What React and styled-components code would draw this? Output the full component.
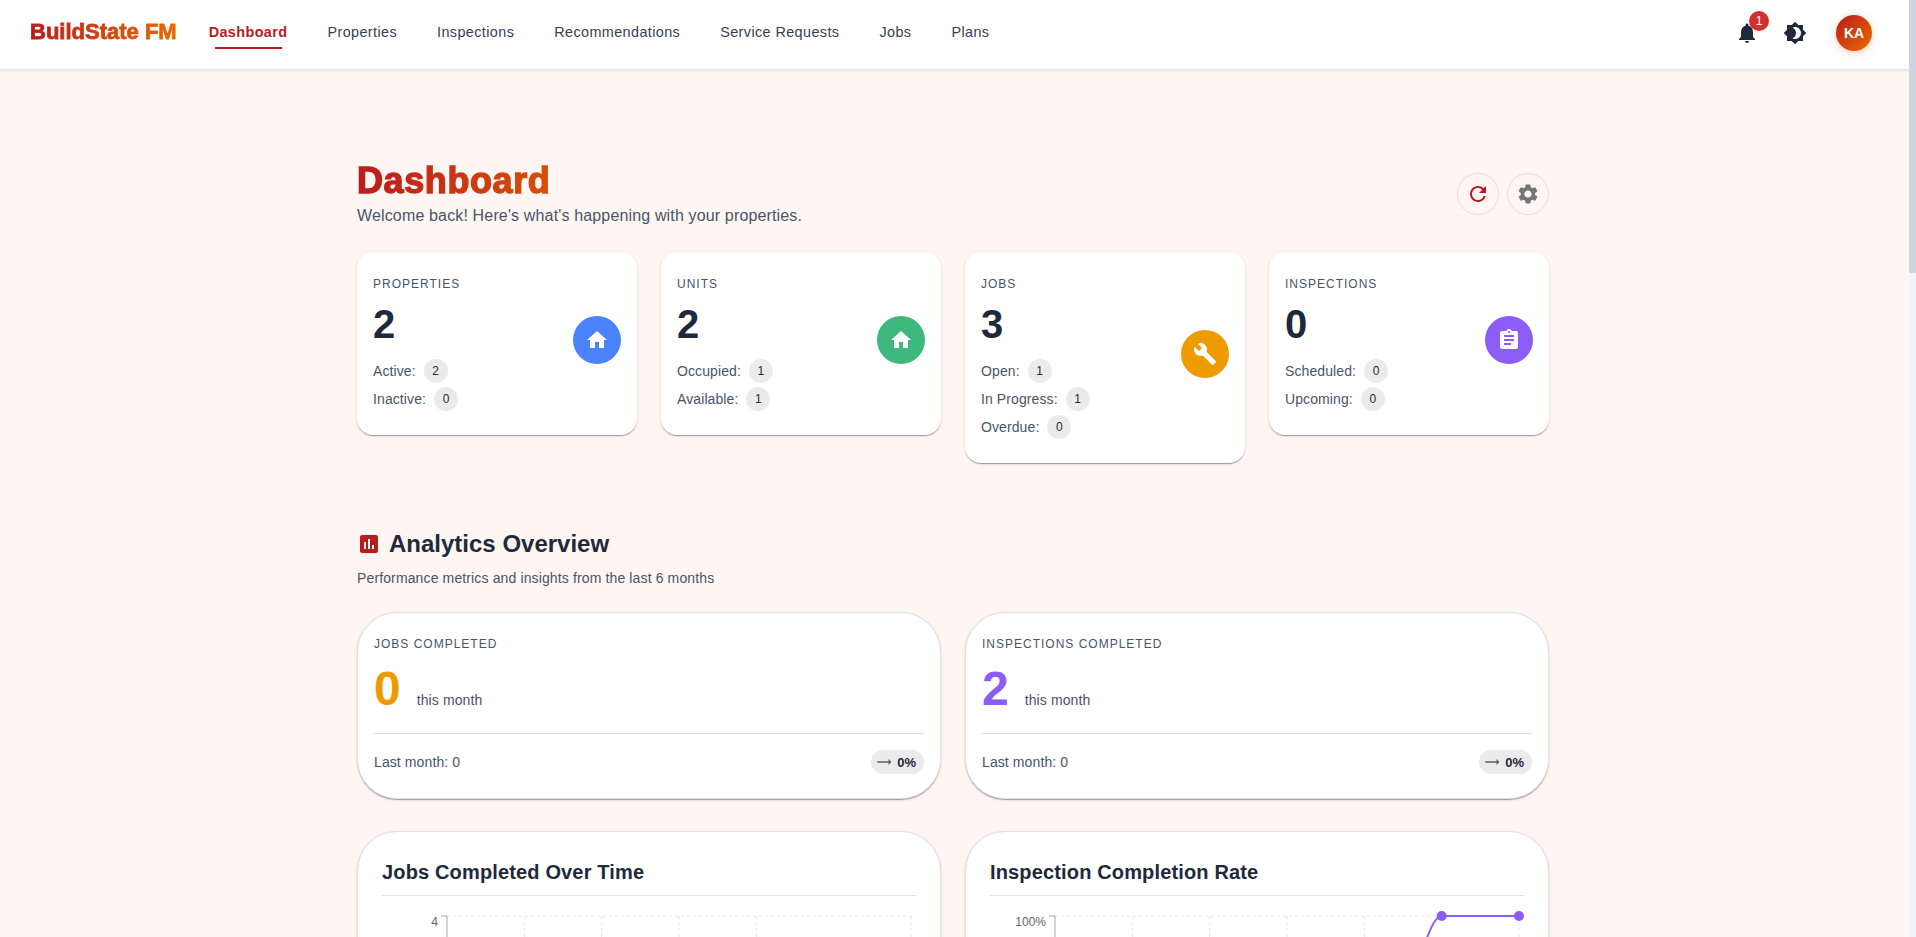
import React from "react";
import styled, { createGlobalStyle } from "styled-components";
import {
  MdHome, MdBuild, MdAssignment, MdRefresh, MdSettings,
  MdNotifications, MdBrightness4, MdAssessment, MdTrendingFlat,
} from "react-icons/md";

const FONT = `"Liberation Sans", Arial, sans-serif`;

const Global = createGlobalStyle`
  html, body { margin: 0; padding: 0; height: 100%; overflow: hidden; }
  body { background: #fff5f3; font-family: ${FONT}; color: #1e293b; }
  #root { height: 100%; }
  * { box-sizing: border-box; }
`;

const Shell = styled.div`
  display: flex;
  height: 100vh;
  background: #fff5f3;
`;

const Page = styled.div`
  flex: 1;
  min-width: 0;
  overflow-y: auto;
  scrollbar-width: none;
`;

const ScrollRail = styled.div`
  width: 7px;
  flex: none;
  background: #f1f5f9;
`;

const ScrollThumb = styled.div`
  height: 273px;
  background: #cbd5e1;
  border-radius: 0 0 2px 2px;
`;

const NavBar = styled.header`
  height: 69px;
  background: #fff;
  box-shadow: 0 1px 3px rgba(0, 0, 0, 0.14);
  display: flex;
  align-items: center;
  padding: 0 37px 5px 30px;
`;

const Logo = styled.div`
  font-size: 22px;
  font-weight: 800;
  line-height: 28px;
  background: linear-gradient(90deg, #b91c1c 0%, #ea6a00 100%);
  -webkit-background-clip: text;
  background-clip: text;
  color: transparent;
  -webkit-text-stroke: 0.8px transparent;
  margin-right: 32px;
  white-space: nowrap;
`;

const Links = styled.nav`
  display: flex;
  gap: 40px;
  flex: 1;
`;

const NavLink = styled.a`
  position: relative;
  font-size: 14.4px;
  line-height: 24px;
  letter-spacing: 0.4px;
  font-weight: ${(p) => (p.$active ? 700 : 400)};
  color: ${(p) => (p.$active ? "#b91c1c" : "#334155")};
  white-space: nowrap;
  &::after {
    content: "";
    display: ${(p) => (p.$active ? "block" : "none")};
    position: absolute;
    left: 6px;
    right: 5px;
    bottom: -5px;
    height: 2px;
    background: #b91c1c;
  }
`;

const NavActions = styled.div`
  display: flex;
  align-items: center;
  margin-top: 2px;
`;

const BellWrap = styled.div`
  position: relative;
  width: 24px;
  height: 24px;
  color: #1e293b;
  font-size: 24px;
  margin-right: 24px;
  svg { display: block; }
`;

const Badge = styled.span`
  position: absolute;
  top: -10px;
  left: 14px;
  width: 20px;
  height: 20px;
  border-radius: 50%;
  background: #d32f2f;
  color: #fff;
  font-size: 12px;
  line-height: 20px;
  text-align: center;
`;

const ThemeIcon = styled.div`
  width: 24px;
  height: 24px;
  font-size: 24px;
  color: #1e293b;
  margin-right: 29px;
  svg { display: block; }
`;

const Avatar = styled.div`
  width: 36px;
  height: 36px;
  border-radius: 50%;
  background: linear-gradient(135deg, #b91c1c 0%, #ea6a00 100%);
  color: #fff;
  font-size: 14px;
  font-weight: 700;
  display: flex;
  align-items: center;
  justify-content: center;
  box-shadow: 0 2px 8px rgba(234, 88, 12, 0.3);
`;

const Main = styled.main`
  width: 1192px;
  margin-left: 357px;
  padding-top: 96px;
  padding-bottom: 200px;
`;

const Header = styled.section`
  display: flex;
  justify-content: space-between;
  align-items: center;
  height: 59px;
  margin-bottom: 28px;
`;

const Title = styled.h1`
  margin: 0;
  font-size: 36px;
  line-height: 38px;
  font-weight: 800;
  letter-spacing: 0.6px;
  background: linear-gradient(90deg, #b91c1c 0%, #ea6a00 300px);
  -webkit-background-clip: text;
  background-clip: text;
  color: transparent;
  -webkit-text-stroke: 1.4px transparent;
  width: 300px;
`;

const Subtitle = styled.p`
  margin: 4px 0 0;
  font-size: 16px;
  line-height: 24px;
  letter-spacing: 0.15px;
  color: #475569;
`;

const HeaderActions = styled.div`
  display: flex;
  gap: 8px;
  margin-top: -2px;
`;

const RoundButton = styled.button`
  width: 42px;
  height: 42px;
  border-radius: 50%;
  border: 1px solid rgba(185, 28, 28, 0.15);
  background: transparent;
  color: ${(p) => p.$color};
  display: flex;
  align-items: center;
  justify-content: center;
  padding: 0;
  font-size: 24px;
`;

const StatGrid = styled.section`
  display: grid;
  grid-template-columns: repeat(4, 1fr);
  gap: 24px;
  align-items: start;
`;

const StatCard = styled.article`
  background: #fff;
  border-radius: 16px;
  padding: 16px 16px 24px;
  box-shadow: 0 2px 1px -1px rgba(0, 0, 0, 0.2), 0 1px 1px rgba(0, 0, 0, 0.14), 0 1px 3px rgba(0, 0, 0, 0.12);
  display: flex;
  align-items: center;
  justify-content: space-between;
`;

const Overline = styled.div`
  font-size: 12px;
  line-height: 32px;
  letter-spacing: 1px;
  color: #475569;
  text-transform: uppercase;
`;

const StatValue = styled.div`
  font-size: 40px;
  line-height: 48px;
  font-weight: 700;
  color: #1e293b;
`;

const StatRows = styled.div`
  display: flex;
  flex-direction: column;
  gap: 4px;
  margin-top: 11px;
`;

const StatRow = styled.div`
  display: flex;
  align-items: center;
  gap: 8px;
  font-size: 14px;
  line-height: 24px;
  letter-spacing: 0.1px;
  color: #475569;
`;

const CountChip = styled.span`
  min-width: 24px;
  height: 24px;
  padding: 0 8px;
  border-radius: 12px;
  background: #ebebeb;
  color: #1e293b;
  font-size: 12px;
  line-height: 24px;
  text-align: center;
`;

const IconCircle = styled.div`
  width: 48px;
  height: 48px;
  border-radius: 50%;
  background: ${(p) => p.$color};
  color: #fff;
  font-size: 24px;
  display: flex;
  align-items: center;
  justify-content: center;
`;

const Analytics = styled.section`
  margin-top: 65px;
`;

const SectionTitle = styled.h2`
  margin: 0;
  display: flex;
  align-items: center;
  gap: 8px;
  font-size: 24px;
  line-height: 32px;
  font-weight: 700;
  color: #1e293b;
  svg { color: #b91c1c; }
`;

const SectionSub = styled.p`
  margin: 8px 0 0;
  font-size: 14px;
  line-height: 20px;
  letter-spacing: 0.13px;
  color: #475569;
`;

const TwoCol = styled.div`
  display: grid;
  grid-template-columns: 1fr 1fr;
  gap: 24px;
  margin-top: ${(p) => p.$top}px;
`;

const MetricCard = styled.article`
  background: #fff;
  border: 1px solid #e2e2e2;
  border-radius: 40px;
  padding: 15px 16px 16px;
  height: 187px;
  box-shadow: 0 2px 1px -1px rgba(0, 0, 0, 0.2), 0 1px 1px rgba(0, 0, 0, 0.14), 0 1px 3px rgba(0, 0, 0, 0.12);
`;

const MetricMain = styled.div`
  display: flex;
  align-items: baseline;
  gap: 16px;
  margin-top: 1px;
  height: 61px;
`;

const MetricValue = styled.div`
  font-size: 48px;
  line-height: 56px;
  font-weight: 700;
  color: ${(p) => p.$color};
`;

const MetricNote = styled.span`
  font-size: 14px;
  letter-spacing: 0.1px;
  color: #475569;
`;

const MetricFoot = styled.div`
  margin-top: 11px;
  padding-top: 16px;
  border-top: 1px solid #e0e0e0;
  display: flex;
  align-items: center;
  justify-content: space-between;
  font-size: 14px;
  letter-spacing: 0.1px;
  color: #475569;
`;

const TrendChip = styled.span`
  height: 24px;
  padding: 0 8px 0 4px;
  border-radius: 12px;
  background: #ebebeb;
  display: inline-flex;
  align-items: center;
  gap: 4px;
  font-size: 13px;
  font-weight: 700;
  letter-spacing: 0;
  color: #1e293b;
  svg { color: #616161; font-size: 18px; }
`;

const ChartCard = styled.article`
  background: #fff;
  border: 1px solid #e2e2e2;
  border-radius: 40px;
  padding: 26px 24px 24px;
  box-shadow: 0 2px 1px -1px rgba(0, 0, 0, 0.2), 0 1px 1px rgba(0, 0, 0, 0.14), 0 1px 3px rgba(0, 0, 0, 0.12);
`;

const ChartTitle = styled.h3`
  margin: 0;
  padding-bottom: 9px;
  border-bottom: 1px solid #e0e0e0;
  font-size: 20px;
  line-height: 28px;
  font-weight: 700;
  letter-spacing: 0.15px;
  color: #1e293b;
`;

const ChartSvg = styled.svg`
  display: block;
  margin-top: 19px;
  overflow: visible;
  font-family: ${FONT};
  font-size: 12px;
`;

const AXIS = "#a3a3ad";
const GRID = "#e5e5e5";
const X0 = 65;
const STEP = 77.33;
const TOP = 1;
const BOTTOM = 231;
const GRID_COLUMNS = [1, 2, 3, 4, 6];

function Chart({ ticks, color, path, dots }) {
  const ys = ticks.map((t, i) => TOP + ((BOTTOM - TOP) / (ticks.length - 1)) * i);
  return (
    <ChartSvg width="534" height="270">
      {ys.map((y) => (
        <line key={y} x1={X0} x2={X0 + STEP * 6} y1={y} y2={y} stroke={GRID} strokeDasharray="3 3" />
      ))}
      {GRID_COLUMNS.map((c) => (
        <line key={c} x1={X0 + STEP * c} x2={X0 + STEP * c} y1={TOP} y2={BOTTOM} stroke={GRID} strokeDasharray="3 3" />
      ))}
      <line x1={X0} x2={X0} y1={TOP} y2={BOTTOM} stroke={AXIS} />
      <line x1={X0} x2={X0 + STEP * 6} y1={BOTTOM} y2={BOTTOM} stroke={AXIS} />
      {ticks.map((t, i) => (
        <g key={t}>
          <line x1={X0 - 6} x2={X0} y1={ys[i]} y2={ys[i]} stroke={AXIS} />
          <text x={X0 - 9} y={ys[i] + 9.5} textAnchor="end" fill="#666">{t}</text>
        </g>
      ))}
      {path && <path d={path} fill="none" stroke={color} strokeWidth="2" />}
      {dots.map(([x, y]) => (
        <circle key={x} cx={x} cy={y} r="5" fill={color} />
      ))}
    </ChartSvg>
  );
}

const stats = [
  { label: "Properties", value: 2, color: "#4a83fb", Icon: MdHome, rows: [["Active", 2], ["Inactive", 0]] },
  { label: "Units", value: 2, color: "#3eb87e", Icon: MdHome, rows: [["Occupied", 1], ["Available", 1]] },
  { label: "Jobs", value: 3, color: "#ee9b00", Icon: MdBuild, rows: [["Open", 1], ["In Progress", 1], ["Overdue", 0]] },
  { label: "Inspections", value: 0, color: "#8b5cf6", Icon: MdAssignment, rows: [["Scheduled", 0], ["Upcoming", 0]] },
];

const metrics = [
  { label: "Jobs Completed", value: 0, color: "#ee9b00" },
  { label: "Inspections Completed", value: 2, color: "#8b5cf6" },
];

const navItems = ["Dashboard", "Properties", "Inspections", "Recommendations", "Service Requests", "Jobs", "Plans"];

export default function App() {
  return (
    <Shell>
      <Global />
      <Page>
        <NavBar>
          <Logo>BuildState FM</Logo>
          <Links>
            {navItems.map((n, i) => (
              <NavLink key={n} $active={i === 0}>{n}</NavLink>
            ))}
          </Links>
          <NavActions>
            <BellWrap>
              <MdNotifications />
              <Badge>1</Badge>
            </BellWrap>
            <ThemeIcon><MdBrightness4 /></ThemeIcon>
            <Avatar>KA</Avatar>
          </NavActions>
        </NavBar>
        <Main>
          <Header>
            <div>
              <Title>Dashboard</Title>
              <Subtitle>Welcome back! Here's what's happening with your properties.</Subtitle>
            </div>
            <HeaderActions>
              <RoundButton $color="#b91c1c"><MdRefresh /></RoundButton>
              <RoundButton $color="#757575"><MdSettings /></RoundButton>
            </HeaderActions>
          </Header>
          <StatGrid>
            {stats.map(({ label, value, color, Icon, rows }) => (
              <StatCard key={label}>
                <div>
                  <Overline>{label}</Overline>
                  <StatValue>{value}</StatValue>
                  <StatRows>
                    {rows.map(([k, v]) => (
                      <StatRow key={k}>{k}: <CountChip>{v}</CountChip></StatRow>
                    ))}
                  </StatRows>
                </div>
                <IconCircle $color={color}><Icon /></IconCircle>
              </StatCard>
            ))}
          </StatGrid>
          <Analytics>
            <SectionTitle><MdAssessment size={24} />Analytics Overview</SectionTitle>
            <SectionSub>Performance metrics and insights from the last 6 months</SectionSub>
            <TwoCol $top={24}>
              {metrics.map((m) => (
                <MetricCard key={m.label}>
                  <Overline>{m.label}</Overline>
                  <MetricMain>
                    <MetricValue $color={m.color}>{m.value}</MetricValue>
                    <MetricNote>this month</MetricNote>
                  </MetricMain>
                  <MetricFoot>
                    <span>Last month: 0</span>
                    <TrendChip><MdTrendingFlat />0%</TrendChip>
                  </MetricFoot>
                </MetricCard>
              ))}
            </TwoCol>
            <TwoCol $top={32}>
              <ChartCard>
                <ChartTitle>Jobs Completed Over Time</ChartTitle>
                <Chart ticks={[4, 3, 2, 1, 0]} color="#ee9b00" dots={[]} />
              </ChartCard>
              <ChartCard>
                <ChartTitle>Inspection Completion Rate</ChartTitle>
                <Chart
                  ticks={["100%", "75%", "50%", "25%", "0%"]}
                  color="#8b5cf6"
                  path={`M${X0 + STEP * 4},${BOTTOM} C${X0 + STEP * 4.33},${BOTTOM} ${X0 + STEP * 4.67},${TOP} ${X0 + STEP * 5},${TOP} L${X0 + STEP * 6},${TOP}`}
                  dots={[[X0 + STEP * 5, TOP], [X0 + STEP * 6, TOP]]}
                />
              </ChartCard>
            </TwoCol>
          </Analytics>
        </Main>
      </Page>
      <ScrollRail><ScrollThumb /></ScrollRail>
    </Shell>
  );
}
